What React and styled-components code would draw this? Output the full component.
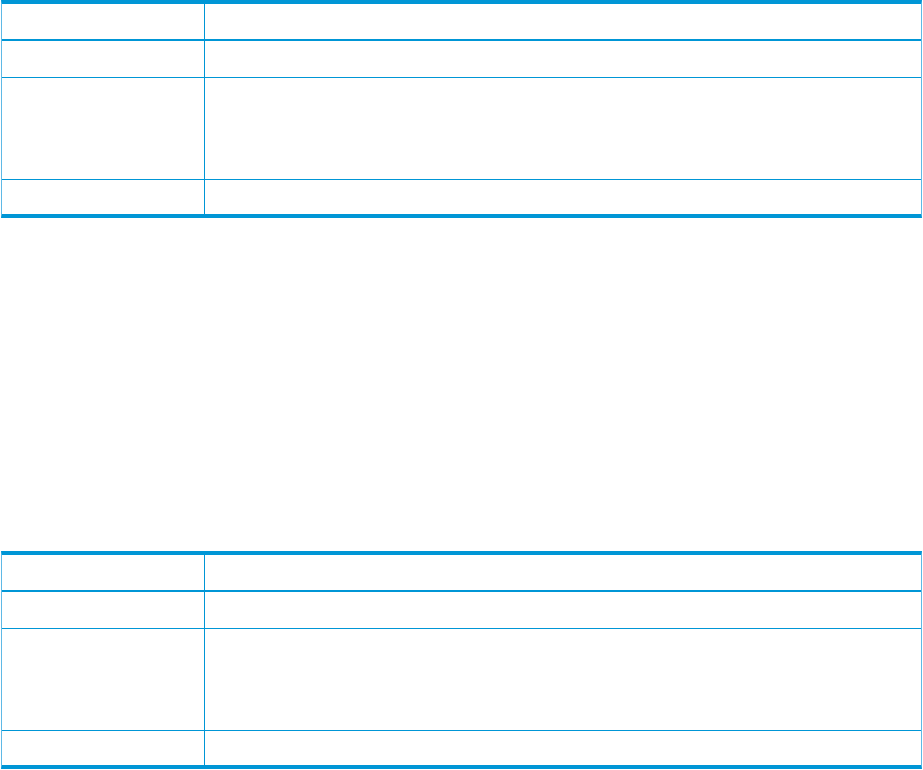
import React from "react";
import styled, { createGlobalStyle } from "styled-components";

const GlobalStyle = createGlobalStyle`
  html, body {
    margin: 0;
    padding: 0;
    background: #fff;
    font-family: "Liberation Sans", Arial, sans-serif;
  }
`;

const BLUE = "#0096d6";
const EDGE = "#5fb9e6";

const Page = styled.div`
  display: flex;
  flex-direction: column;
  gap: 333px;
  padding: 0 1px 0 1px;
  width: 923px;
  box-sizing: border-box;
`;

const Table = styled.div`
  display: flex;
  flex-direction: column;
  border-top: 4px solid ${BLUE};
  border-bottom: 4px solid ${BLUE};
  border-left: 1px solid ${EDGE};
  border-right: 1px solid ${EDGE};
`;

const Row = styled.div`
  display: grid;
  grid-template-columns: 202px 1fr;
  height: ${(p) => p.$h}px;
  border-bottom: ${(p) => (p.$line ? `${p.$line}px solid ${BLUE}` : "none")};
`;

const Cell = styled.div`
  & + & {
    border-left: 1px solid ${BLUE};
  }
`;

const rows = [
  { h: 35, line: 2 },
  { h: 36, line: 1 },
  { h: 101, line: 1 },
  { h: 34, line: 0 },
];

function EmptyTable() {
  return (
    <Table>
      {rows.map((r, i) => (
        <Row key={i} $h={r.h} $line={r.line}>
          <Cell />
          <Cell />
        </Row>
      ))}
    </Table>
  );
}

export default function App() {
  return (
    <>
      <GlobalStyle />
      <Page>
        <EmptyTable />
        <EmptyTable />
      </Page>
    </>
  );
}
